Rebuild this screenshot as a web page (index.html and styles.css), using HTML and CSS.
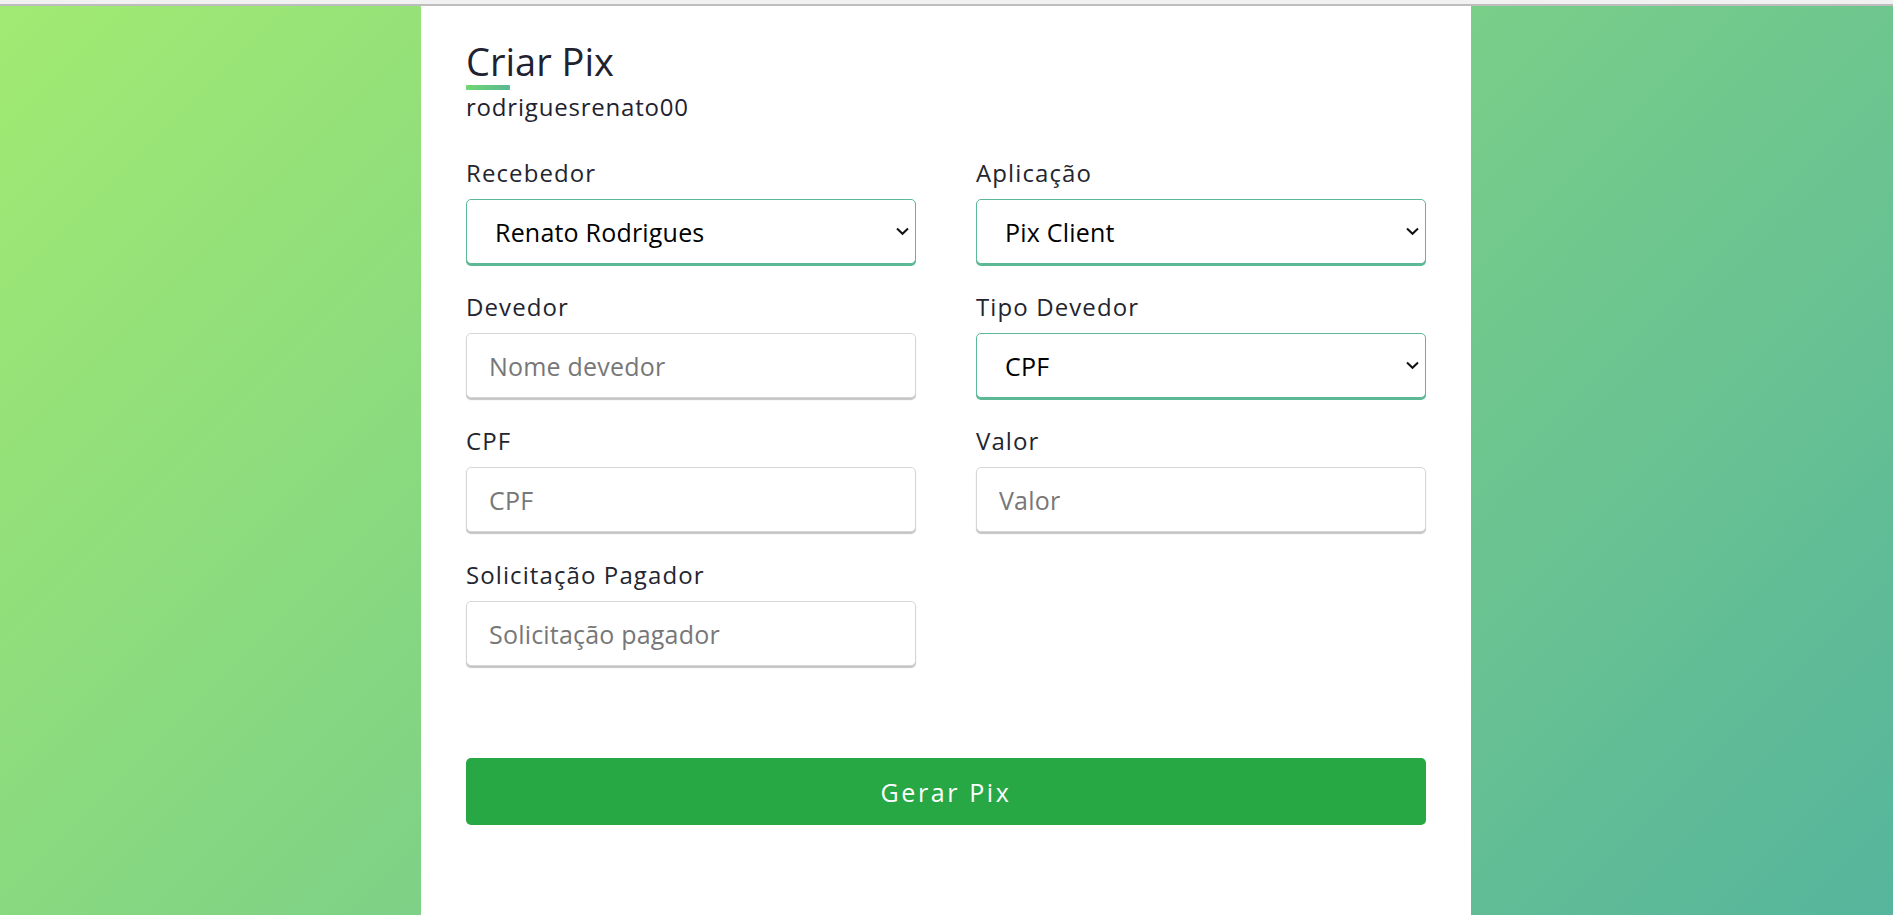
FILE: index.html
```html
<!DOCTYPE html>
<html lang="pt-BR">
<head>
<meta charset="utf-8">
<title>Criar Pix</title>
<link rel="stylesheet" href="styles.css">
</head>
<body>
<div class="topbar"></div>
<div class="page">
  <main class="card">
    <h1 class="title">Criar Pix</h1>
    <div class="title-bar"></div>
    <p class="user">rodriguesrenato00</p>
    <form class="form">
      <div class="field">
        <label class="label">Recebedor</label>
        <div class="select-wrap">
          <select class="control select"><option>Renato Rodrigues</option></select>
          <svg class="chev" width="13" height="9" viewBox="0 0 13 9"><path d="M1 1.6 L6.5 6.8 L12 1.6" fill="none" stroke="#111" stroke-width="2"/></svg>
        </div>
      </div>
      <div class="field">
        <label class="label">Aplicação</label>
        <div class="select-wrap">
          <select class="control select"><option>Pix Client</option></select>
          <svg class="chev" width="13" height="9" viewBox="0 0 13 9"><path d="M1 1.6 L6.5 6.8 L12 1.6" fill="none" stroke="#111" stroke-width="2"/></svg>
        </div>
      </div>
      <div class="field">
        <label class="label">Devedor</label>
        <input class="control input" placeholder="Nome devedor">
      </div>
      <div class="field">
        <label class="label">Tipo Devedor</label>
        <div class="select-wrap">
          <select class="control select"><option>CPF</option></select>
          <svg class="chev" width="13" height="9" viewBox="0 0 13 9"><path d="M1 1.6 L6.5 6.8 L12 1.6" fill="none" stroke="#111" stroke-width="2"/></svg>
        </div>
      </div>
      <div class="field">
        <label class="label">CPF</label>
        <input class="control input" placeholder="CPF">
      </div>
      <div class="field">
        <label class="label">Valor</label>
        <input class="control input" placeholder="Valor">
      </div>
      <div class="field">
        <label class="label">Solicitação Pagador</label>
        <input class="control input" placeholder="Solicitação pagador">
      </div>
    </form>
    <button class="btn" type="button">Gerar Pix</button>
  </main>
</div>
</body>
</html>
```
FILE: styles.css
```css
* { box-sizing: border-box; }
html, body { margin: 0; padding: 0; }
body {
  font-family: "Open Sans", "Noto Sans", sans-serif;
  color: #1f2230;
  overflow: hidden;
}
.topbar {
  height: 6px;
  background: #f1f1f1;
  border-bottom: 2px solid #bdbdbd;
}
.page {
  min-height: calc(100vh - 6px);
  background: linear-gradient(135deg, #a1ea72 0%, #56b59c 100%);
  display: flex;
  justify-content: center;
  padding-right: 1px;
}
.card {
  width: 1050px;
  flex: 0 0 1050px;
  background: #fff;
  padding: 32px 45px 60px;
}
.title {
  margin: 0;
  font-size: 38px;
  line-height: 46px;
  font-weight: 400;
  color: #1f2230;
}
.title-bar {
  width: 44px;
  height: 5px;
  margin-top: 1px;
  background: linear-gradient(90deg, #6fd870, #5bb893);
  border-radius: 1px;
}
.user {
  margin: 2px 0 0;
  font-size: 24px;
  line-height: 30px;
  letter-spacing: 0.8px;
  color: #1f2230;
}
.form {
  margin-top: 36px;
  display: grid;
  grid-template-columns: 450px 450px;
  column-gap: 60px;
  row-gap: 28px;
}
.field {
  display: flex;
  flex-direction: column;
}
.label {
  font-size: 24px;
  line-height: 30px;
  letter-spacing: 1.1px;
  color: #23252f;
  margin-bottom: 11px;
}
.control {
  width: 100%;
  height: 65px;
  border-radius: 5px;
  font-family: inherit;
  font-size: 25px;
  background: #fff;
  outline: none;
  margin: 0;
}
.input {
  border: 1px solid #d6d6d6;
  box-shadow: 0 2px 1px #c4c4c4;
  padding: 0 22px;
  color: #111;
  letter-spacing: 0.2px;
}
.input::placeholder { color: #777; }
.select-wrap { position: relative; }
.select {
  -webkit-appearance: none;
  appearance: none;
  border: 1px solid #5cb895;
  box-shadow: 0 2px 0 #5cb895;
  padding: 0 28px;
  color: #000;
  letter-spacing: 0.2px;
}
.chev {
  position: absolute;
  right: 7px;
  top: 28px;
  pointer-events: none;
}
.btn {
  display: block;
  width: 100%;
  height: 67px;
  margin-top: 92px;
  border: none;
  border-radius: 5px;
  background: #28a745;
  color: #fff;
  font-family: inherit;
  font-size: 25px;
  letter-spacing: 2.6px;
  cursor: pointer;
}
```
